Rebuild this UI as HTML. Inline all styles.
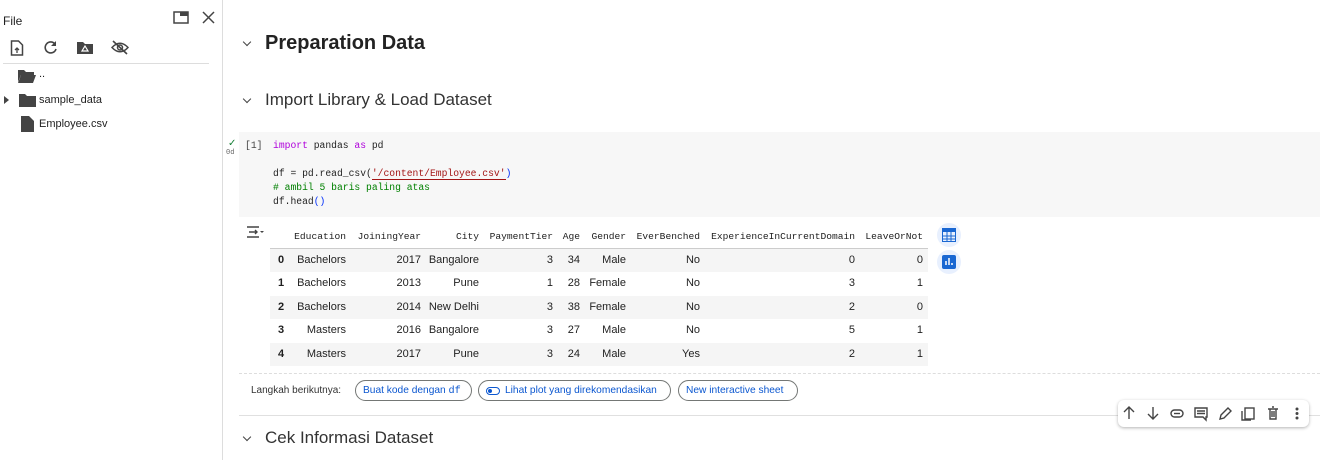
<!DOCTYPE html>
<html><head><meta charset="utf-8"><style>
*{margin:0;padding:0;box-sizing:border-box}
body{width:1320px;height:460px;overflow:hidden;background:#fff;font-family:"Liberation Sans",sans-serif;color:#1f1f1f;position:relative}
.a{position:absolute;white-space:nowrap}
.mono{font-family:"Liberation Mono",monospace}
.r{position:absolute;left:0;text-align:right;white-space:nowrap}
.row{position:absolute;left:0;width:1320px;height:23px}
.row .r{top:5px;font-size:11px}
.hdr .r{font-family:"Liberation Mono",monospace;font-size:9.6px;color:#212121;top:0}
.chip{position:absolute;top:380px;height:21px;border:1px solid #747775;border-radius:11px;font-size:10.2px;color:#0b57d0;padding:4px 7px;white-space:nowrap}
.chev{position:absolute;width:6px;height:6px;border-right:1.5px solid #444;border-bottom:1.5px solid #444;transform:rotate(45deg)}
</style></head><body>
<!-- sidebar -->
<div class="a" style="left:3px;top:14px;font-size:12px">File</div>
<svg class="a" style="left:173px;top:11px" width="16" height="14"><rect x="1" y="1" width="14" height="11" fill="none" stroke="#444" stroke-width="1.5"/><rect x="7" y="1" width="8" height="4" fill="#444"/></svg>
<svg class="a" style="left:202px;top:11px" width="13" height="13"><path d="M1 1L12 12M12 1L1 12" stroke="#444" stroke-width="1.5"/></svg>
<svg class="a" style="left:10px;top:40px" width="14" height="16"><path d="M1.5 1h7l4 4v10h-11z" fill="none" stroke="#444" stroke-width="1.5"/><path d="M7 13V8M5 10l2-2 2 2" stroke="#444" stroke-width="1.3" fill="none"/></svg>
<svg class="a" style="left:43px;top:40px" width="15" height="15"><path d="M12 4A5.5 5.5 0 1 0 13 9" fill="none" stroke="#444" stroke-width="1.6"/><path d="M13 1v5h-5z" fill="#444"/></svg>
<svg class="a" style="left:77px;top:41px" width="16" height="13"><path d="M0 1h6l2 2h8v10H0z" fill="#444"/><path d="M8 5l3 5H5z" fill="none" stroke="#fff" stroke-width="1.2"/></svg>
<svg class="a" style="left:111px;top:40px" width="18" height="15"><path d="M1 7.5Q9-1 17 7.5Q9 16 1 7.5z" fill="none" stroke="#444" stroke-width="1.5"/><circle cx="9" cy="7.5" r="2.5" fill="none" stroke="#444" stroke-width="1.5"/><path d="M2 1l14 13" stroke="#444" stroke-width="1.6"/></svg>
<div class="a" style="left:3px;top:63px;width:206px;height:1px;background:#ddd"></div>
<svg class="a" style="left:18px;top:69px" width="18" height="14"><path d="M0 1h6l2 2h8v3H3L0 13z" fill="#444"/><path d="M3 6h15l-3 8H0z" fill="#444"/></svg>
<div class="a" style="left:39px;top:68px;font-size:11px">..</div>
<svg class="a" style="left:4px;top:96px" width="6" height="8"><path d="M0 0l5 4-5 4z" fill="#444"/></svg>
<svg class="a" style="left:19px;top:93px" width="17" height="14"><path d="M0 1h6l2 2h9v11H0z" fill="#444"/></svg>
<div class="a" style="left:39px;top:94px;font-size:11px">sample_data</div>
<svg class="a" style="left:21px;top:116px" width="13" height="16"><path d="M0 0h8l5 5v11H0z" fill="#444"/></svg>
<div class="a" style="left:39px;top:118px;font-size:11px">Employee.csv</div>
<div class="a" style="left:222px;top:0;width:1px;height:460px;background:#ddd"></div>
<!-- headings -->
<div class="chev" style="left:244px;top:39px"></div>
<div class="a" style="left:265px;top:32px;font-size:20px;font-weight:bold;color:#222">Preparation Data</div>
<div class="chev" style="left:244px;top:96px"></div>
<div class="a" style="left:265px;top:90px;font-size:17px;color:#333">Import Library &amp; Load Dataset</div>
<!-- code cell -->
<div class="a" style="left:239px;top:132px;width:1081px;height:85px;background:#f7f7f7"></div>
<div class="a" style="left:228px;top:138px;font-size:10px;color:#188038">✓</div>
<div class="a mono" style="left:226px;top:149px;font-size:7px;color:#666">0d</div>
<div class="a mono" style="left:245px;top:140px;font-size:9.7px;color:#444">[1]</div>
<div class="a mono" style="left:273px;top:139px;font-size:9.7px;line-height:14px;color:#1f1f1f">
<span style="color:#af00db">import</span> pandas <span style="color:#af00db">as</span> pd<br><br>
df = pd.read_csv(<span style="color:#a31515;border-bottom:1px solid #a31515">'/content/Employee.csv'</span><span style="color:#0431fa">)</span><br>
<span style="color:#008000"># ambil 5 baris paling atas</span><br>
df.head<span style="color:#0431fa">()</span></div>
<!-- output icon -->
<svg class="a" style="left:246px;top:226px" width="18" height="12"><path d="M1 1h12M1 11h12M3 6h8M9 4l2 2-2 2" stroke="#444" stroke-width="1.4" fill="none"/><path d="M14 5h4l-2 2z" fill="#444"/></svg>
<!-- table -->
<div class="a" style="left:270px;top:248px;width:658px;height:1px;background:#ccc"></div>
<div class="a" style="left:270px;top:249px;width:658px;height:23px;background:#f5f5f5"></div>
<div class="a" style="left:270px;top:296px;width:658px;height:23px;background:#f5f5f5"></div>
<div class="a" style="left:270px;top:343px;width:658px;height:23px;background:#f5f5f5"></div>
<div class="row hdr" style="top:231px">
<div class="r" style="width:346px">Education</div><div class="r" style="width:421px">JoiningYear</div><div class="r" style="width:479px">City</div><div class="r" style="width:553px">PaymentTier</div><div class="r" style="width:580px">Age</div><div class="r" style="width:626px">Gender</div><div class="r" style="width:700px">EverBenched</div><div class="r" style="width:855px">ExperienceInCurrentDomain</div><div class="r" style="width:923px">LeaveOrNot</div></div>
<div class="row" style="top:249px"><div class="a" style="left:278px;top:5px;font-size:11px;font-weight:bold">0</div><div class="r" style="width:346px">Bachelors</div><div class="r" style="width:421px">2017</div><div class="r" style="width:479px">Bangalore</div><div class="r" style="width:553px">3</div><div class="r" style="width:580px">34</div><div class="r" style="width:626px">Male</div><div class="r" style="width:700px">No</div><div class="r" style="width:855px">0</div><div class="r" style="width:923px">0</div></div>
<div class="row" style="top:272px"><div class="a" style="left:278px;top:5px;font-size:11px;font-weight:bold">1</div><div class="r" style="width:346px">Bachelors</div><div class="r" style="width:421px">2013</div><div class="r" style="width:479px">Pune</div><div class="r" style="width:553px">1</div><div class="r" style="width:580px">28</div><div class="r" style="width:626px">Female</div><div class="r" style="width:700px">No</div><div class="r" style="width:855px">3</div><div class="r" style="width:923px">1</div></div>
<div class="row" style="top:296px"><div class="a" style="left:278px;top:5px;font-size:11px;font-weight:bold">2</div><div class="r" style="width:346px">Bachelors</div><div class="r" style="width:421px">2014</div><div class="r" style="width:479px">New Delhi</div><div class="r" style="width:553px">3</div><div class="r" style="width:580px">38</div><div class="r" style="width:626px">Female</div><div class="r" style="width:700px">No</div><div class="r" style="width:855px">2</div><div class="r" style="width:923px">0</div></div>
<div class="row" style="top:319px"><div class="a" style="left:278px;top:5px;font-size:11px;font-weight:bold">3</div><div class="r" style="width:346px">Masters</div><div class="r" style="width:421px">2016</div><div class="r" style="width:479px">Bangalore</div><div class="r" style="width:553px">3</div><div class="r" style="width:580px">27</div><div class="r" style="width:626px">Male</div><div class="r" style="width:700px">No</div><div class="r" style="width:855px">5</div><div class="r" style="width:923px">1</div></div>
<div class="row" style="top:343px"><div class="a" style="left:278px;top:5px;font-size:11px;font-weight:bold">4</div><div class="r" style="width:346px">Masters</div><div class="r" style="width:421px">2017</div><div class="r" style="width:479px">Pune</div><div class="r" style="width:553px">3</div><div class="r" style="width:580px">24</div><div class="r" style="width:626px">Male</div><div class="r" style="width:700px">Yes</div><div class="r" style="width:855px">2</div><div class="r" style="width:923px">1</div></div>
<!-- side buttons -->
<div class="a" style="left:937px;top:223px;width:24px;height:24px;border-radius:12px;background:#e8f0fe"></div>
<svg class="a" style="left:942px;top:228px" width="14" height="14"><rect x="0.5" y="0.5" width="13" height="13" fill="none" stroke="#1967d2"/><rect x="0" y="0" width="14" height="4" fill="#1967d2"/><path d="M0 8h14M0 11h14M5 4v10M9 4v10" stroke="#1967d2"/></svg>
<div class="a" style="left:937px;top:250px;width:24px;height:24px;border-radius:12px;background:#e8f0fe"></div>
<svg class="a" style="left:942px;top:255px" width="14" height="14"><rect width="14" height="14" rx="2" fill="#1967d2"/><path d="M4 10V6M7 10V3M10 10V8" stroke="#fff" stroke-width="1.5"/></svg>
<!-- next steps -->
<div class="a" style="left:239px;top:373px;width:1081px;border-top:1px dashed #ddd"></div>
<div class="a" style="left:251px;top:385px;font-size:10px;color:#333">Langkah berikutnya:</div>
<div class="chip" style="left:355px;width:117px">Buat kode dengan <span class="mono">df</span></div>
<div class="chip" style="left:478px;width:193px;padding-left:26px"><svg style="position:absolute;left:7px;top:6px" width="14" height="8"><rect x="0.5" y="0.5" width="13" height="7" rx="3.5" fill="none" stroke="#0b57d0"/><circle cx="4" cy="4" r="2" fill="#0b57d0"/></svg>Lihat plot yang direkomendasikan</div>
<div class="chip" style="left:678px;width:120px">New interactive sheet</div>
<!-- bottom section -->
<div class="a" style="left:239px;top:415px;width:1081px;height:1px;background:#e0e0e0"></div>
<div class="chev" style="left:244px;top:434px"></div>
<div class="a" style="left:265px;top:428px;font-size:17px;color:#333">Cek Informasi Dataset</div>
<!-- toolbar -->
<div class="a" style="left:1118px;top:400px;width:191px;height:27px;background:#fff;border-radius:6px;box-shadow:0 1px 3px rgba(0,0,0,.3)"></div>
<svg class="a" style="left:1118px;top:400px" width="191" height="27" fill="none" stroke="#444" stroke-width="1.4">
<path d="M11 19V8M6 12l5-5 5 5"/>
<path d="M35 7v11M30 14l5 5 5-5"/>
<rect x="53" y="10" width="12" height="7" rx="3.5"/><path d="M56 13.5h6"/>
<path d="M77 8h12v9h-1v3l-3-3h-8z M79 11h8M79 13.5h8"/>
<path d="M102 19l1-4 7-7 3 3-7 7z"/>
<rect x="127" y="8" width="9" height="11"/><path d="M124 11v9h9"/>
<path d="M150 9h10M152 9v10h6V9M154 7h2M154 11v6M156 11v6"/>
<circle cx="179" cy="9" r=".8" fill="#444"/><circle cx="179" cy="13.5" r=".8" fill="#444"/><circle cx="179" cy="18" r=".8" fill="#444"/>
</svg>
</body></html>
